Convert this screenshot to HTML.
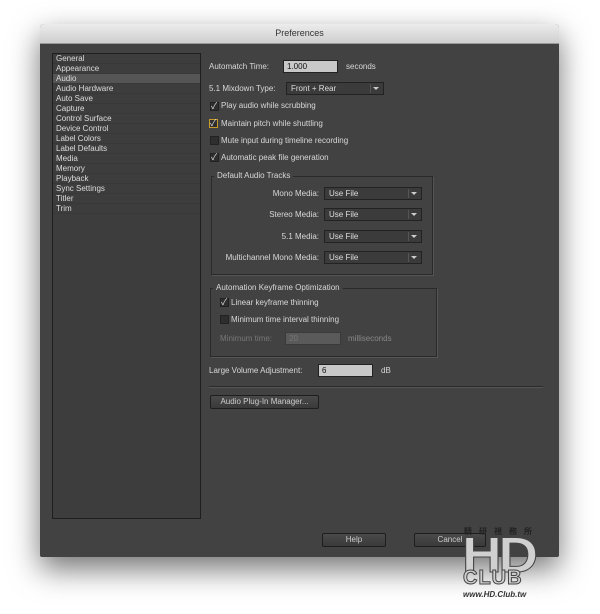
<!DOCTYPE html>
<html><head><style>
body{margin:0;width:600px;height:614px;background:#fff;position:relative;overflow:hidden;font-family:"Liberation Sans","Noto Sans CJK TC",sans-serif;font-size:8px;color:#d8d8d8}
.a{position:absolute;white-space:nowrap}
#win{position:absolute;left:40px;top:24px;width:519px;height:533px;background:#424242;box-shadow:0 12px 30px rgba(0,0,0,.55);border-radius:4px 4px 2px 2px;overflow:hidden}
#tb{position:absolute;left:0;top:0;width:519px;height:19px;background:linear-gradient(#ececec,#cfcfcf);border-bottom:1px solid #999;color:#333;font-size:9px;text-align:center;line-height:19px}
#list{position:absolute;left:12px;top:29px;width:147px;height:464px;background:#3d3d3d;border:1px solid #1e1e1e}
.li{height:9px;line-height:9px;padding-left:3px;border-bottom:1px solid #383838;color:#ddd}
.sel{background:#555}
.inp{position:absolute;background:#c8c8c8;border:1px solid #222;color:#111;height:11px;line-height:11px;padding-left:3px}
.dd{position:absolute;background:#3b3b3b;border:1px solid #222;height:11px;line-height:11px;padding-left:4px;color:#ddd}
.dd:after{content:"";position:absolute;right:0;top:1px;width:12px;height:9px;border-left:1px solid #555}
.dd b{position:absolute;right:4px;top:4px;border:3px solid transparent;border-top:3px solid #ccc;border-bottom:0}
.cb{position:absolute;width:7px;height:7px;background:#2e2e2e;border:1px solid #222}
.ck:before{content:"✓";position:absolute;left:0;top:-4px;font-size:9px;color:#ddd}
.grp{position:absolute;border:1px solid #2a2a2a;box-shadow:1px 1px 0 #555}
.btn{position:absolute;background:linear-gradient(#4a4a4a,#3a3a3a);border:1px solid #1e1e1e;height:12px;line-height:12px;text-align:center;color:#ccc;border-radius:2px}
</style></head><body>
<div id="win">
<div id="tb">Preferences</div>
<div id="list">
<div class="li">General</div><div class="li">Appearance</div><div class="li sel">Audio</div><div class="li">Audio Hardware</div><div class="li">Auto Save</div><div class="li">Capture</div><div class="li">Control Surface</div><div class="li">Device Control</div><div class="li">Label Colors</div><div class="li">Label Defaults</div><div class="li">Media</div><div class="li">Memory</div><div class="li">Playback</div><div class="li">Sync Settings</div><div class="li">Titler</div><div class="li">Trim</div>
</div>
</div>
<div class="a" style="left:209px;top:62px">Automatch Time:</div>
<div class="inp" style="left:283px;top:60px;width:50px">1.000</div>
<div class="a" style="left:346px;top:62px">seconds</div>
<div class="a" style="left:209px;top:84px">5.1 Mixdown Type:</div>
<div class="dd" style="left:286px;top:82px;width:92px">Front + Rear<b></b></div>
<div class="cb ck" style="left:210px;top:102px"></div><div class="a" style="left:221px;top:101px">Play audio while scrubbing</div>
<div class="cb ck" style="left:209px;top:119px;border-color:#c89a2a"></div><div class="a" style="left:221px;top:119px">Maintain pitch while shuttling</div>
<div class="cb" style="left:210px;top:136px"></div><div class="a" style="left:221px;top:136px">Mute input during timeline recording</div>
<div class="cb ck" style="left:210px;top:153px"></div><div class="a" style="left:221px;top:153px">Automatic peak file generation</div>
<div class="grp" style="left:211px;top:176px;width:220px;height:97px"></div>
<div class="a" style="left:214px;top:171px;background:#424242;padding:0 3px">Default Audio Tracks</div>
<div class="a" style="left:200px;top:189px;width:119px;text-align:right">Mono Media:</div><div class="dd" style="left:324px;top:187px;width:92px">Use File<b></b></div>
<div class="a" style="left:200px;top:210px;width:119px;text-align:right">Stereo Media:</div><div class="dd" style="left:324px;top:208px;width:92px">Use File<b></b></div>
<div class="a" style="left:200px;top:232px;width:119px;text-align:right">5.1 Media:</div><div class="dd" style="left:324px;top:230px;width:92px">Use File<b></b></div>
<div class="a" style="left:200px;top:253px;width:119px;text-align:right">Multichannel Mono Media:</div><div class="dd" style="left:324px;top:251px;width:92px">Use File<b></b></div>
<div class="grp" style="left:210px;top:288px;width:225px;height:67px"></div>
<div class="a" style="left:213px;top:283px;background:#424242;padding:0 3px">Automation Keyframe Optimization</div>
<div class="cb ck" style="left:220px;top:298px"></div><div class="a" style="left:231px;top:298px">Linear keyframe thinning</div>
<div class="cb" style="left:220px;top:315px"></div><div class="a" style="left:231px;top:315px">Minimum time interval thinning</div>
<div class="a" style="left:220px;top:334px;color:#777">Minimum time:</div>
<div class="inp" style="left:285px;top:332px;width:51px;background:#5a5a5a;color:#777;border-color:#3a3a3a">20</div>
<div class="a" style="left:348px;top:334px;color:#888">milliseconds</div>
<div class="a" style="left:209px;top:366px">Large Volume Adjustment:</div>
<div class="inp" style="left:318px;top:364px;width:50px">6</div>
<div class="a" style="left:381px;top:366px">dB</div>
<div class="a" style="left:209px;top:386px;width:334px;height:1px;background:#2a2a2a;border-bottom:1px solid #555"></div>
<div class="btn" style="left:210px;top:395px;width:107px">Audio Plug-In Manager...</div>
<div class="btn" style="left:322px;top:533px;width:62px">Help</div>
<div class="btn" style="left:414px;top:533px;width:70px">Cancel</div>
<div class="a" style="left:464px;top:526px;font-size:8px;font-weight:bold;color:#222;letter-spacing:7px">精研視務所</div>
<div class="a" style="left:462px;top:534px;font-size:50px;line-height:42px;font-weight:bold;color:#d0d0d0;-webkit-text-stroke:1px #444;letter-spacing:-3px;transform:scaleX(1.1);transform-origin:left">HD</div>
<div class="a" style="left:463px;top:570px;font-size:20px;line-height:16px;font-weight:bold;color:#d0d0d0;-webkit-text-stroke:1px #444;letter-spacing:1px">CLUB</div>
<div class="a" style="left:463px;top:590px;font-size:8px;font-style:italic;font-weight:bold;color:#333">www.HD.Club.tw</div>
</body></html>
